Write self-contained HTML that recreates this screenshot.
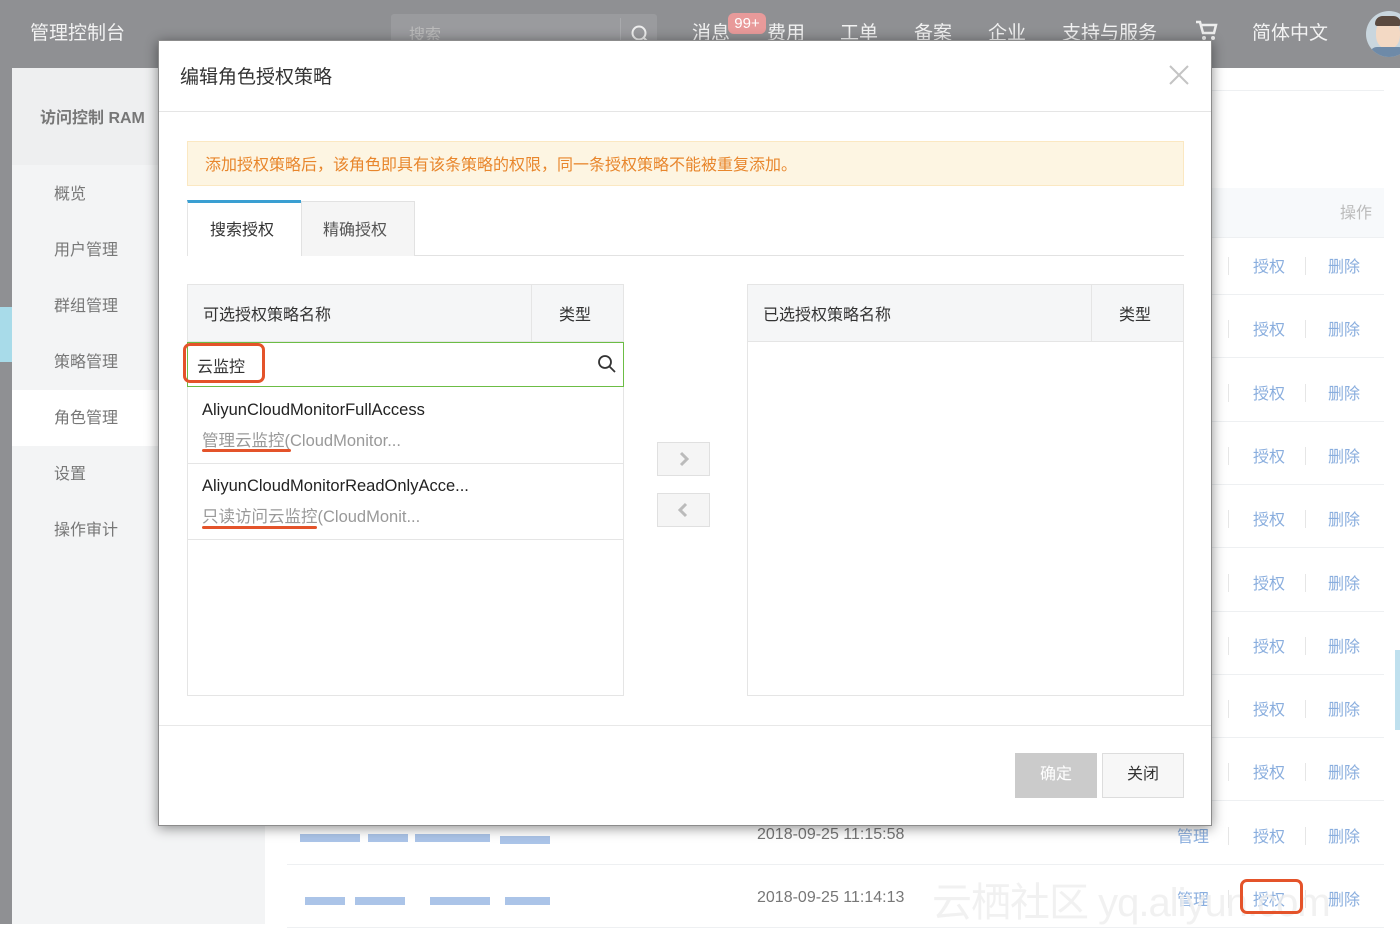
<!DOCTYPE html>
<html><head><meta charset="utf-8">
<style>
*{margin:0;padding:0;box-sizing:border-box}
body{width:1400px;height:924px;overflow:hidden;position:relative;background:#fff;font-family:"Liberation Sans","Noto Sans CJK SC",sans-serif;color:#333}
.abs{position:absolute}
.top{left:0;top:0;width:1400px;height:68px;background:#8f9093}
.top .t{position:absolute;top:18px;font-size:19px;color:#f2f2f2;white-space:nowrap}
.side{left:12px;top:68px;width:253px;height:856px;background:#f3f4f5}
.strip{left:0;top:68px;width:12px;height:856px;background:#8f9093}
.side .it{position:absolute;left:42px;font-size:16px;color:#777}
.row{position:absolute;left:287px;width:1097px;height:63px;border-bottom:1px solid #eef0f2}
.lnk{position:absolute;font-size:16px;color:#8aaede}
.sep{position:absolute;width:1px;height:18px;background:#e6e6e6}
.dlg{left:158px;top:40px;width:1054px;height:786px;background:#fff;box-shadow:0 2px 12px rgba(0,0,0,.45);border:1px solid #8c8c8c}
.blur{position:absolute;height:8px;background:#8fb0e0;opacity:.75}
</style></head><body>
<div class="abs top">
  <div class="t" style="left:30px">管理控制台</div>
  <div class="abs" style="left:391px;top:14px;width:266px;height:40px;background:#9a9b9e;border-radius:3px"></div>
  <div class="abs" style="left:620px;top:18px;width:1px;height:30px;background:#a9aaad"></div>
  <div class="t" style="left:409px;font-size:16px;top:21px;color:#bcbcbc">搜索</div>
  <svg class="abs" style="left:630px;top:24px" width="20" height="20"><circle cx="9" cy="9" r="6.5" fill="none" stroke="#eee" stroke-width="2"/><line x1="14" y1="14" x2="18" y2="18" stroke="#eee" stroke-width="2"/></svg>
  <div class="t" style="left:692px">消息</div>
  <div class="abs" style="left:728px;top:13px;width:38px;height:21px;background:#e89a9a;border-radius:6px;color:#fff;font-size:15px;text-align:center;line-height:21px">99+</div>
  <div class="t" style="left:767px">费用</div>
  <div class="t" style="left:840px">工单</div>
  <div class="t" style="left:914px">备案</div>
  <div class="t" style="left:988px">企业</div>
  <div class="t" style="left:1062px">支持与服务</div>
  <svg class="abs" style="left:1195px;top:20px" width="24" height="22"><path d="M1 2h4l3 11h11l2-8H7" fill="none" stroke="#eee" stroke-width="2.5"/><circle cx="9" cy="18" r="2" fill="#eee"/><circle cx="18" cy="18" r="2" fill="#eee"/></svg>
  <div class="t" style="left:1252px">简体中文</div>
  <div class="abs" style="left:1366px;top:11px;width:46px;height:46px;border-radius:50%;background:#c9d6de;overflow:hidden">
    <div class="abs" style="left:10px;top:8px;width:24px;height:30px;border-radius:45%;background:#f3d9c4"></div>
    <div class="abs" style="left:9px;top:5px;width:26px;height:10px;border-radius:10px 10px 3px 3px;background:#5a4a40"></div>
    <div class="abs" style="left:4px;top:36px;width:36px;height:14px;border-radius:10px;background:#6e8aa8"></div>
  </div>
</div>
<div class="abs strip"></div>
<div class="abs" style="left:0;top:307px;width:12px;height:55px;background:#a8dbe9"></div>
<div class="abs side">
  <div class="abs" style="left:0;top:0;width:253px;height:97px;background:#eeeff0"></div>
  <div class="abs" style="left:28px;top:36px;font-size:16px;font-weight:bold;color:#777">访问控制 RAM</div>
  <div class="it" style="top:112px">概览</div>
  <div class="it" style="top:168px">用户管理</div>
  <div class="it" style="top:224px">群组管理</div>
  <div class="it" style="top:280px">策略管理</div>
  <div class="abs" style="left:0;top:322px;width:253px;height:56px;background:#fff"></div>
  <div class="it" style="top:336px">角色管理</div>
  <div class="it" style="top:392px">设置</div>
  <div class="it" style="top:448px">操作审计</div>
</div>
<div class="abs" style="left:1212px;top:90px;width:172px;height:1px;background:#eef0f2"></div>
<div class="abs" style="left:287px;top:188px;width:1097px;height:50px;background:#f7f9fb;border-bottom:1px solid #eef0f2"></div>
<div class="abs" style="left:1340px;top:199px;font-size:16px;color:#bbb">操作</div>
<div class="abs" style="left:1395px;top:650px;width:5px;height:80px;background:#bfe0ee"></div>
<div id="rows"></div>
<script>
var h='';for(var i=0;i<11;i++){var y=266+i*63.3;
h+='<div class="row" style="top:'+(y-34)+'px"></div>';
h+='<div class="sep" style="left:1228px;top:'+(y-9)+'px"></div><div class="lnk" style="left:1253px;top:'+(y-13)+'px">授权</div><div class="sep" style="left:1305px;top:'+(y-9)+'px"></div><div class="lnk" style="left:1328px;top:'+(y-13)+'px">删除</div>';}
document.getElementById('rows').innerHTML=h;
</script>
<div class="lnk" style="left:1177px;top:823px">管理</div>
<div class="lnk" style="left:1177px;top:886px">管理</div>
<div class="abs" style="left:757px;top:826px;font-size:16px;color:#777">2018-09-25 11:15:58</div>
<div class="abs" style="left:757px;top:889px;font-size:16px;color:#777">2018-09-25 11:14:13</div>
<div class="blur" style="left:300px;top:834px;width:60px"></div><div class="blur" style="left:368px;top:834px;width:40px"></div><div class="blur" style="left:415px;top:834px;width:75px"></div><div class="blur" style="left:500px;top:836px;width:50px"></div>
<div class="blur" style="left:305px;top:897px;width:40px"></div><div class="blur" style="left:355px;top:897px;width:50px"></div><div class="blur" style="left:430px;top:897px;width:60px"></div><div class="blur" style="left:505px;top:897px;width:45px"></div>
<div class="abs" style="left:932px;top:870px;font-size:40px;color:rgba(238,238,238,.8);white-space:nowrap;letter-spacing:-1px">云栖社区 yq.aliyun.com</div>
<div class="abs" style="left:1240px;top:879px;width:63px;height:35px;border:3px solid #e4532a;border-radius:7px"></div>

<div class="abs dlg">
  <div class="abs" style="left:21px;top:21px;font-size:19px;color:#333">编辑角色授权策略</div>
  <svg class="abs" style="left:1010px;top:24px" width="20" height="20"><path d="M1 1L19 19M19 1L1 19" stroke="#c4c4c4" stroke-width="2"/></svg>
  <div class="abs" style="left:0;top:70px;width:1052px;height:1px;background:#e5e5e5"></div>
  <div class="abs" style="left:28px;top:100px;width:997px;height:45px;background:#fdf5e2;border:1px solid #fbe8c2"></div>
  <div class="abs" style="left:46px;top:110px;font-size:16px;color:#e8862c">添加授权策略后，该角色即具有该条策略的权限，同一条授权策略不能被重复添加。</div>
  <div class="abs" style="left:28px;top:159px;width:114px;height:56px;background:#fff;border-top:3px solid #3a9fd2;border-left:1px solid #e5e5e5"></div>
  <div class="abs" style="left:51px;top:175px;font-size:16px;color:#333">搜索授权</div>
  <div class="abs" style="left:142px;top:160px;width:114px;height:55px;background:#f5f5f5;border:1px solid #e2e2e2;border-bottom:none"></div>
  <div class="abs" style="left:164px;top:175px;font-size:16px;color:#555">精确授权</div>
  <div class="abs" style="left:256px;top:214px;width:769px;height:1px;background:#e2e2e2"></div>
  <div class="abs" style="left:28px;top:243px;width:437px;height:412px;border:1px solid #e5e5e5"></div>
  <div class="abs" style="left:29px;top:244px;width:435px;height:57px;background:#f5f6f7;border-bottom:1px solid #e5e5e5"></div>
  <div class="abs" style="left:372px;top:244px;width:1px;height:57px;background:#e5e5e5"></div>
  <div class="abs" style="left:44px;top:260px;font-size:16px">可选授权策略名称</div>
  <div class="abs" style="left:400px;top:260px;font-size:16px">类型</div>
  <div class="abs" style="left:28px;top:301px;width:437px;height:45px;border:1px solid #6cbd45;background:#fff"></div>
  <div class="abs" style="left:38px;top:312px;font-size:16px;color:#333">云监控</div>
  <svg class="abs" style="left:438px;top:313px" width="20" height="20"><circle cx="8" cy="8" r="6" fill="none" stroke="#333" stroke-width="1.8"/><line x1="12.5" y1="12.5" x2="18" y2="18" stroke="#333" stroke-width="1.8"/></svg>
  <div class="abs" style="left:24px;top:302px;width:82px;height:40px;border:3px solid #e4532a;border-radius:7px"></div>
  <div class="abs" style="left:29px;top:422px;width:435px;height:1px;background:#e5e5e5"></div>
  <div class="abs" style="left:29px;top:498px;width:435px;height:1px;background:#e5e5e5"></div>
  <div class="abs" style="left:43px;top:360px;font-size:16.5px;color:#222">AliyunCloudMonitorFullAccess</div>
  <div class="abs" style="left:43px;top:386px;font-size:16.5px;color:#999">管理云监控(CloudMonitor...</div>
  <div class="abs" style="left:43px;top:408px;width:89px;height:3px;background:#e4532a;border-radius:2px"></div>
  <div class="abs" style="left:43px;top:436px;font-size:16.5px;color:#222">AliyunCloudMonitorReadOnlyAcce...</div>
  <div class="abs" style="left:43px;top:462px;font-size:16.5px;color:#999">只读访问云监控(CloudMonit...</div>
  <div class="abs" style="left:43px;top:485px;width:115px;height:3px;background:#e4532a;border-radius:2px"></div>
  <div class="abs" style="left:498px;top:401px;width:53px;height:34px;background:#f5f5f5;border:1px solid #e0e0e0"></div>
  <svg class="abs" style="left:518px;top:410px" width="14" height="16"><path d="M4 2L10 8L4 14" fill="none" stroke="#bbb" stroke-width="3"/></svg>
  <div class="abs" style="left:498px;top:452px;width:53px;height:34px;background:#f5f5f5;border:1px solid #e0e0e0"></div>
  <svg class="abs" style="left:517px;top:461px" width="14" height="16"><path d="M10 2L4 8L10 14" fill="none" stroke="#bbb" stroke-width="3"/></svg>
  <div class="abs" style="left:588px;top:243px;width:437px;height:412px;border:1px solid #e5e5e5"></div>
  <div class="abs" style="left:589px;top:244px;width:435px;height:57px;background:#f5f6f7;border-bottom:1px solid #e5e5e5"></div>
  <div class="abs" style="left:932px;top:244px;width:1px;height:57px;background:#e5e5e5"></div>
  <div class="abs" style="left:604px;top:260px;font-size:16px">已选授权策略名称</div>
  <div class="abs" style="left:960px;top:260px;font-size:16px">类型</div>
  <div class="abs" style="left:0;top:684px;width:1052px;height:1px;background:#e8e8e8"></div>
  <div class="abs" style="left:856px;top:712px;width:82px;height:45px;background:#cbcbcb;color:#fff;font-size:16px;text-align:center;line-height:43px">确定</div>
  <div class="abs" style="left:943px;top:712px;width:82px;height:45px;background:#f7f7f7;border:1px solid #ddd;font-size:16px;text-align:center;line-height:41px;color:#333">关闭</div>
</div>
</body></html>
